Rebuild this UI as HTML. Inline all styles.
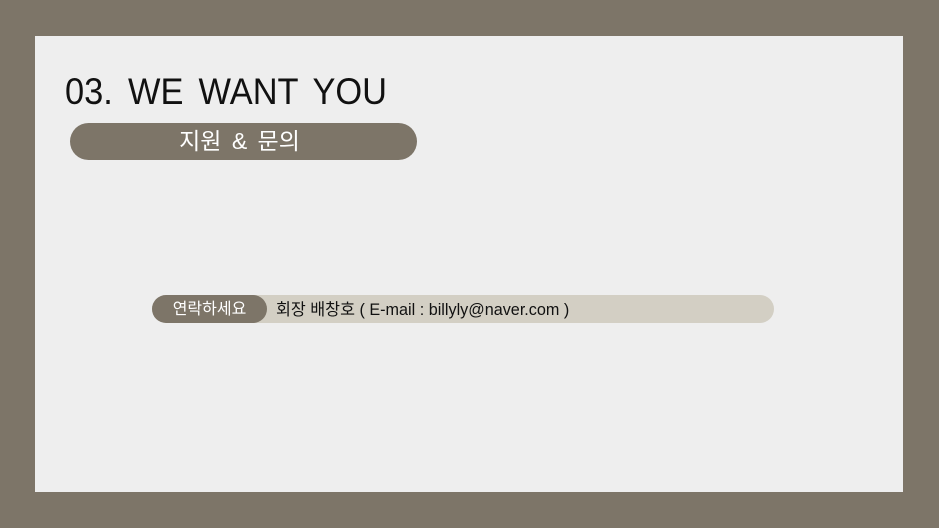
<!DOCTYPE html>
<html><head><meta charset="utf-8"><style>
body{margin:0;width:939px;height:528px;background:#7d7568;position:relative;overflow:hidden;font-family:"Liberation Sans","Noto Sans CJK KR",sans-serif}
.card{position:absolute;left:35px;top:36px;width:868px;height:456px;background:#eeeeee}
.title{position:absolute;left:65px;top:70px;font-size:37px;color:#111;line-height:44px;white-space:nowrap;transform:scaleX(0.93);transform-origin:left;word-spacing:6px}
.pill{position:absolute;left:70px;top:123px;width:347px;height:37px;border-radius:19px;background:#7d7568;color:#fff;font-size:23px;line-height:37px;text-align:center;word-spacing:4px;box-sizing:border-box}
.pill span{display:inline-block;position:relative;left:-4px}
.bar{position:absolute;left:152px;top:295px;width:622px;height:28px;border-radius:14px;background:#d3cfc4}
.lab{position:absolute;left:152px;top:295px;width:115px;height:28px;border-radius:14px;background:#7d7568;color:#fff;font-size:16px;line-height:29px;text-align:center}
.txt{position:absolute;left:276px;top:296px;font-size:16.2px;line-height:28px;color:#111;white-space:nowrap}
</style></head><body>
<div class="card"></div>
<div class="title">03. WE WANT YOU</div>
<div class="pill"><span>지원 &amp; 문의</span></div>
<div class="bar"></div>
<div class="lab">연락하세요</div>
<div class="txt">회장 배창호 ( E-mail : billyly@naver.com )</div>
</body></html>
